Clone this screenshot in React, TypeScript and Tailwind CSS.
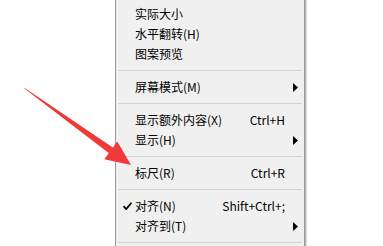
import React from 'react';

type Item =
  | { kind: 'sep' }
  | { kind: 'item'; label: string; shortcut?: string; submenu?: boolean; checked?: boolean };

const items: Item[] = [
  { kind: 'item', label: '实际大小' },
  { kind: 'item', label: '水平翻转(H)' },
  { kind: 'item', label: '图案预览' },
  { kind: 'sep' },
  { kind: 'item', label: '屏幕模式(M)', submenu: true },
  { kind: 'sep' },
  { kind: 'item', label: '显示额外内容(X)', shortcut: 'Ctrl+H' },
  { kind: 'item', label: '显示(H)', submenu: true },
  { kind: 'sep' },
  { kind: 'item', label: '标尺(R)', shortcut: 'Ctrl+R' },
  { kind: 'sep' },
  { kind: 'item', label: '对齐(N)', shortcut: 'Shift+Ctrl+;', checked: true },
  { kind: 'item', label: '对齐到(T)', submenu: true },
  { kind: 'sep' },
  { kind: 'item', label: '' },
];

const Check = () => (
  <svg width="9" height="8" viewBox="0 0 9 8" className="ml-[7px]">
    <path d="M0.5 4.2 L3.2 7 L8.5 0.8" fill="none" stroke="#000" strokeWidth="1.8" />
  </svg>
);

const SubArrow = () => (
  <svg width="5" height="9" viewBox="0 0 5 9" className="ml-[8px]">
    <path d="M0 0 L5 4.5 L0 9 Z" fill="#000" />
  </svg>
);

// red annotation arrow drawn over the page
const RedArrow = () => (
  <svg width="140" height="180" viewBox="0 0 140 180" className="absolute left-0 top-0 pointer-events-none">
    <polygon
      points="24,87.5 112.9,147.5 117.3,141.4 131,165 104.3,159.2 108.7,153.1 25,89"
      fill="#f03a3a"
    />
  </svg>
);

const App: React.FC = () => {
  return (
    <div className="relative h-[246px] w-[383px] overflow-hidden bg-white font-['Noto_Sans_CJK_SC',sans-serif] text-[12px] text-black">
      <div className="pl-[115px]">
        <div className="w-[190px] border-l border-r border-[#979797] bg-[#f0f0f0] pt-[4px] shadow-[1px_0_0_#b8b8b8,2px_0_0_#dcdcdc]">
          {items.map((it, i) =>
            it.kind === 'sep' ? (
              <div key={i} className="h-[13px] pt-[6px] pl-[2px] pr-[2px]">
                <div className="h-px bg-[#d4d4d4]" />
              </div>
            ) : (
              <div key={i} className="flex h-[20px] items-center leading-[20px]">
                <div className="flex w-[19px] items-center">{it.checked && <Check />}</div>
                <div className="flex-1 whitespace-nowrap">{it.label}</div>
                {it.shortcut && <div className="whitespace-nowrap">{it.shortcut}</div>}
                <div className="flex w-[19px] items-center">{it.submenu && <SubArrow />}</div>
              </div>
            )
          )}
        </div>
      </div>
      <RedArrow />
    </div>
  );
};

export default App;
